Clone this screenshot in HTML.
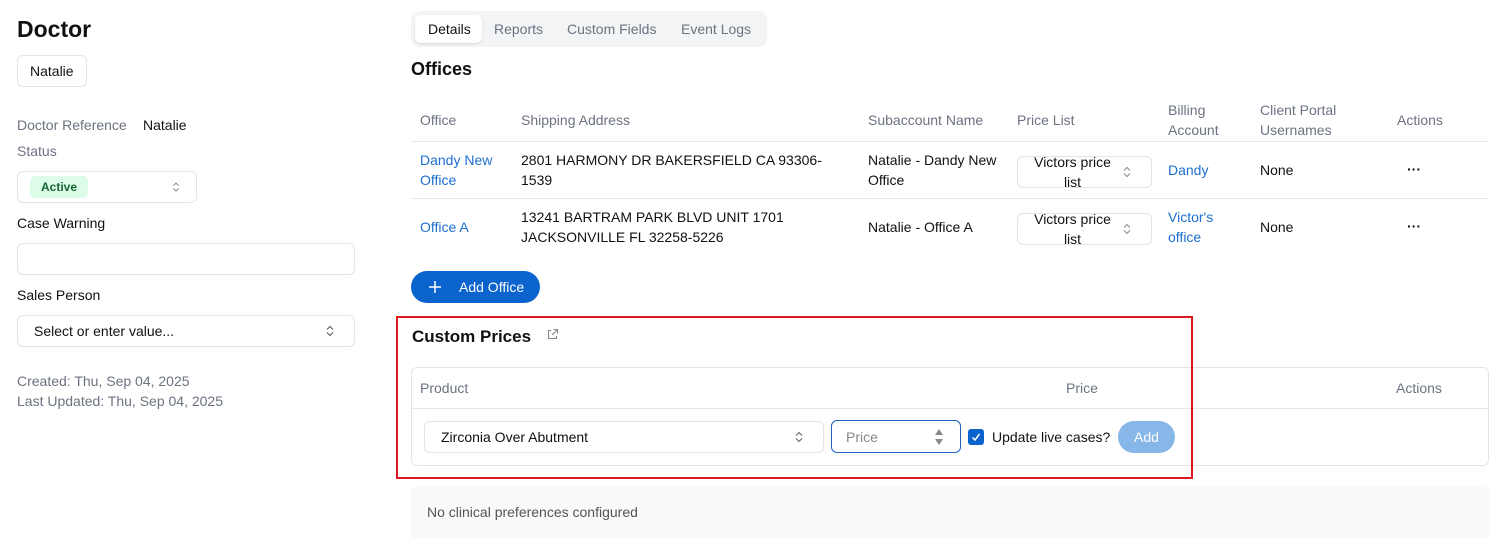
<!DOCTYPE html>
<html><head><meta charset="utf-8"><style>
*{box-sizing:border-box;margin:0;padding:0}
body{width:1505px;height:552px;background:#fff;font-family:"Liberation Sans",Arial,sans-serif;font-size:14px;color:#111;position:relative;overflow:hidden}
.a{position:absolute;white-space:nowrap}
.g{color:#6b7280}
.b{color:#1d6fd1}
.box{position:absolute;border:1px solid #e2e4e8;border-radius:6px;background:#fff}
.chev{position:absolute;width:8px;height:12px}
.line{position:absolute;height:1px;background:#e5e7eb}
</style></head><body>
<div class="a" style="left:17px;top:16px;font-size:23px;font-weight:bold">Doctor</div>
<div class="box" style="left:17px;top:55px;width:70px;height:32px"></div>
<div class="a" style="left:30px;top:63px">Natalie</div>
<div class="a g" style="left:17px;top:117px">Doctor Reference</div>
<div class="a" style="left:143px;top:117px">Natalie</div>
<div class="a g" style="left:17px;top:143px">Status</div>
<div class="box" style="left:17px;top:171px;width:180px;height:32px"></div>
<div class="a" style="left:30px;top:176px;width:58px;height:22px;background:#dcfce7;border-radius:5px;color:#166534;font-weight:bold;font-size:12px;text-align:center;line-height:22px">Active</div>
<svg class="chev" style="left:172px;top:181px" viewBox="0 0 8 12"><path d="M1.5 4.5L4 2l2.5 2.5M1.5 7.5L4 10l2.5-2.5" fill="none" stroke="#888" stroke-width="1"/></svg>
<div class="a" style="left:17px;top:215px">Case Warning</div>
<div class="box" style="left:17px;top:243px;width:338px;height:32px"></div>
<div class="a" style="left:17px;top:287px">Sales Person</div>
<div class="box" style="left:17px;top:315px;width:338px;height:32px"></div>
<div class="a" style="left:34px;top:323px">Select or enter value...</div>
<svg class="chev" style="left:326px;top:325px" viewBox="0 0 8 12"><path d="M1 4.5L4 1.5l3 3M1 7.5L4 10.5l3-3" fill="none" stroke="#666" stroke-width="1.2"/></svg>
<div class="a g" style="left:17px;top:373px">Created: Thu, Sep 04, 2025</div>
<div class="a g" style="left:17px;top:393px">Last Updated: Thu, Sep 04, 2025</div>

<div class="a" style="left:411px;top:11px;width:356px;height:36px;background:#f3f4f6;border-radius:8px"></div>
<div class="a" style="left:415px;top:15px;width:67px;height:28px;background:#fff;border-radius:6px;box-shadow:0 1px 2px rgba(0,0,0,.12)"></div>
<div class="a" style="left:428px;top:21px">Details</div>
<div class="a g" style="left:494px;top:21px">Reports</div>
<div class="a g" style="left:567px;top:21px">Custom Fields</div>
<div class="a g" style="left:681px;top:21px">Event Logs</div>
<div class="a" style="left:411px;top:59px;font-size:18px;font-weight:bold">Offices</div>

<div class="a g" style="left:420px;top:112px">Office</div>
<div class="a g" style="left:521px;top:112px">Shipping Address</div>
<div class="a g" style="left:868px;top:112px">Subaccount Name</div>
<div class="a g" style="left:1017px;top:112px">Price List</div>
<div class="a g" style="left:1168px;top:100px;line-height:20px">Billing<br>Account</div>
<div class="a g" style="left:1260px;top:100px;line-height:20px">Client Portal<br>Usernames</div>
<div class="a g" style="left:1397px;top:112px">Actions</div>
<div class="line" style="left:411px;top:141px;width:1078px"></div>
<div class="line" style="left:411px;top:198px;width:1078px"></div>

<div class="a b" style="left:420px;top:150px;line-height:20px">Dandy New<br>Office</div>
<div class="a" style="left:521px;top:150px;line-height:20px">2801 HARMONY DR BAKERSFIELD CA 93306-<br>1539</div>
<div class="a" style="left:868px;top:150px;line-height:20px">Natalie - Dandy New<br>Office</div>
<div class="box" style="left:1017px;top:156px;width:135px;height:32px"></div>
<div class="a" style="left:1030px;top:152px;width:85px;text-align:center;line-height:20px">Victors price<br>list</div>
<svg class="chev" style="left:1123px;top:166px" viewBox="0 0 8 12"><path d="M1 4.5L4 1.5l3 3M1 7.5L4 10.5l3-3" fill="none" stroke="#888" stroke-width="1"/></svg>
<div class="a b" style="left:1168px;top:162px">Dandy</div>
<div class="a" style="left:1260px;top:162px">None</div>
<div class="a" style="left:1407px;top:161px;font-weight:bold">···</div>

<div class="a b" style="left:420px;top:219px">Office A</div>
<div class="a" style="left:521px;top:207px;line-height:20px">13241 BARTRAM PARK BLVD UNIT 1701<br>JACKSONVILLE FL 32258-5226</div>
<div class="a" style="left:868px;top:219px">Natalie - Office A</div>
<div class="box" style="left:1017px;top:213px;width:135px;height:32px"></div>
<div class="a" style="left:1030px;top:209px;width:85px;text-align:center;line-height:20px">Victors price<br>list</div>
<svg class="chev" style="left:1123px;top:223px" viewBox="0 0 8 12"><path d="M1 4.5L4 1.5l3 3M1 7.5L4 10.5l3-3" fill="none" stroke="#888" stroke-width="1"/></svg>
<div class="a b" style="left:1168px;top:207px;line-height:20px">Victor's<br>office</div>
<div class="a" style="left:1260px;top:219px">None</div>
<div class="a" style="left:1407px;top:218px;font-weight:bold">···</div>

<div class="a" style="left:411px;top:271px;width:129px;height:32px;background:#0b63ce;border-radius:16px"></div>
<svg class="a" style="left:429px;top:281px" width="12" height="12"><path d="M6 0v12M0 6h12" stroke="#fff" stroke-width="1.5"/></svg>
<div class="a" style="left:459px;top:279px;color:#fff">Add Office</div>

<div class="a" style="left:412px;top:327px;font-size:17px;font-weight:bold">Custom Prices</div>
<svg class="a" style="left:546px;top:328px" width="13" height="13" viewBox="0 0 13 13"><path d="M5 2.5H2.5v8h8V8M7.5 1.5h4v4M11.5 1.5L6 7" fill="none" stroke="#888" stroke-width="1.1"/></svg>
<div class="box" style="left:411px;top:367px;width:1078px;height:99px"></div>
<div class="a g" style="left:420px;top:380px">Product</div>
<div class="a g" style="left:1066px;top:380px">Price</div>
<div class="a g" style="left:1396px;top:380px">Actions</div>
<div class="line" style="left:412px;top:408px;width:1076px"></div>
<div class="box" style="left:424px;top:421px;width:400px;height:32px"></div>
<div class="a" style="left:441px;top:429px">Zirconia Over Abutment</div>
<svg class="chev" style="left:795px;top:431px" viewBox="0 0 8 12"><path d="M1 4.5L4 1.5l3 3M1 7.5L4 10.5l3-3" fill="none" stroke="#666" stroke-width="1.1"/></svg>
<div class="a" style="left:831px;top:420px;width:130px;height:33px;border:1px solid #1d64c4;border-radius:6px"></div>
<div class="a g" style="left:846px;top:429px;color:#888">Price</div>
<svg class="a" style="left:934px;top:428px" width="10" height="18"><path d="M1 7L5 1l4 6zM1 11l4 6 4-6z" fill="#888"/></svg>
<div class="a" style="left:968px;top:429px;width:16px;height:16px;background:#0b63ce;border-radius:3px"></div>
<svg class="a" style="left:971px;top:432px" width="10" height="10"><path d="M1.5 5.5l2.5 2.5 4.5-6" fill="none" stroke="#fff" stroke-width="1.5"/></svg>
<div class="a" style="left:992px;top:429px">Update live cases?</div>
<div class="a" style="left:1118px;top:421px;width:57px;height:32px;background:#87b6e8;border-radius:16px;color:#fff;text-align:center;line-height:32px">Add</div>
<div class="a" style="left:396px;top:316px;width:797px;height:163px;border:2px solid #e0161f;z-index:5"></div>

<div class="a" style="left:411px;top:487px;width:1078px;height:51px;background:#f8f9fb;border-radius:4px"></div>
<div class="a g" style="left:427px;top:504px;color:#555">No clinical preferences configured</div>
</body></html>
